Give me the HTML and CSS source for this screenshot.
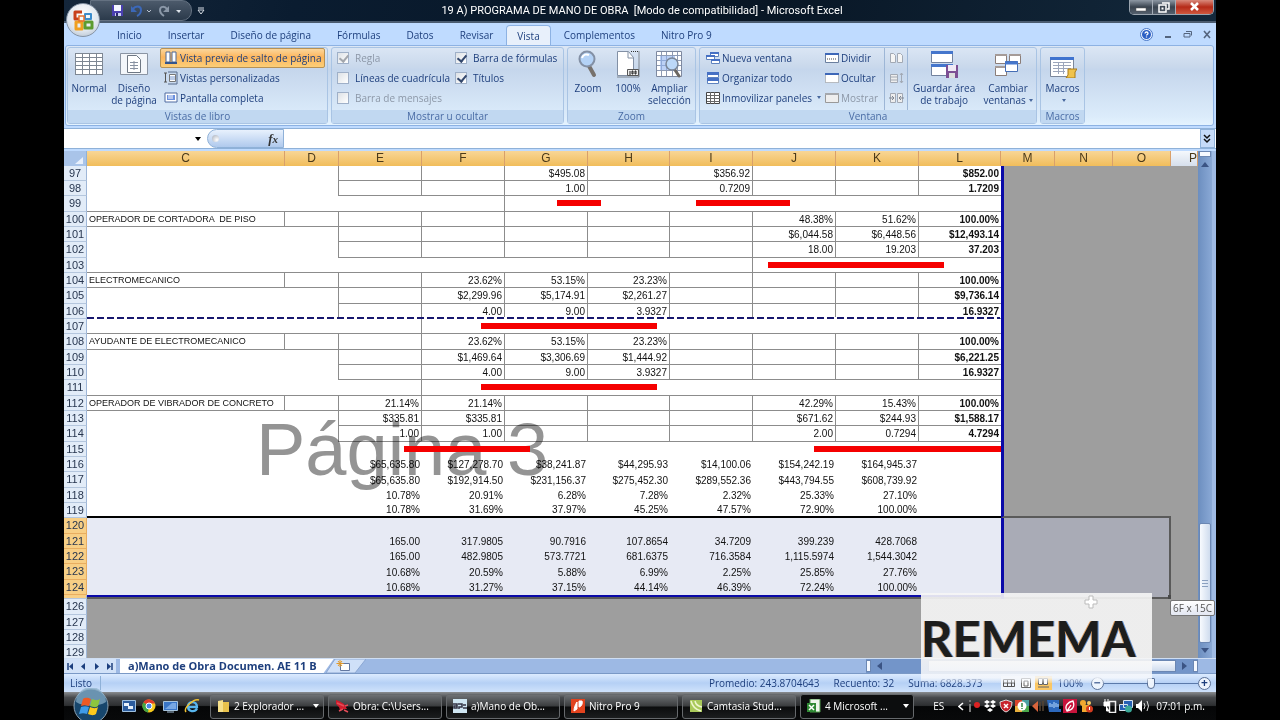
FILE: index.html
```html
<!DOCTYPE html>
<html lang="es">

<head>
    <meta charset="UTF-8">
    <meta name="viewport" content="width=device-width, initial-scale=1.0">
    <title>19 A) PROGRAMA DE MANO DE OBRA - Microsoft Excel</title>
    <link rel="stylesheet" href="styles.css">
</head>

<body>
    <div class="desktop">
        <header class="titlebar">
            <div class="quick">
                <button aria-label="Guardar"><svg width="13" height="13" viewBox="0 0 13 13"><path d="M1 1h11v11H1z" fill="#4a3fb0"/><path d="M3 1h7v6H3z" fill="#f4f6ff"/><path d="M4 9h6v3H4z" fill="#c9cff0"/><path d="M5 9h2v3H5z" fill="#2b2670"/></svg></button>
                <button aria-label="Deshacer"><svg width="22" height="13" viewBox="0 0 22 13"><path d="M3 5c2-3 8-4 8 1 0 3-2 5-4 6" fill="none" stroke="#3c68b8" stroke-width="2"/><path d="M1 2v6h6z" fill="#3c68b8"/><path d="M17 6l2 2 2-2" fill="none" stroke="#b9c2cf"/></svg></button>
                <button aria-label="Rehacer"><svg width="24" height="13" viewBox="0 0 24 13"><path d="M9 5c-2-3-7-3-7 1 0 3 1 4 4 6" fill="none" stroke="#8b98a8" stroke-width="2"/><path d="M11 2v6H5z" fill="#8b98a8"/><path d="M18 6h5l-2 3z" fill="#dde3ea"/></svg></button>
            </div>
            <button class="more" aria-label="Personalizar"><svg width="8" height="8" viewBox="0 0 8 8"><path d="M1 1h6" stroke="#d5dbe3"/><path d="M1 3h6L4 7z" fill="none" stroke="#d5dbe3"/></svg></button>
            <h1>19 A) PROGRAMA DE MANO DE OBRA&nbsp; [Modo de compatibilidad] - Microsoft Excel</h1>
            <div class="win-buttons">
                <button aria-label="Minimizar"><svg width="12" height="10" viewBox="0 0 12 10"><path d="M1 6h10v3H1z" fill="#fff" stroke="#555" stroke-width=".5"/></svg></button>
                <button aria-label="Restaurar"><svg width="12" height="11" viewBox="0 0 12 11"><path d="M4 1h7v6H9M1 3h7v7H1z" fill="none" stroke="#fff" stroke-width="1.5"/><path d="M3.500 5.500h2v2h-2z" fill="#fff"/></svg></button>
                <button class="close" aria-label="Cerrar"><svg width="11" height="10" viewBox="0 0 11 10"><path d="M2 1l7 7M9 1L2 8" stroke="#fff" stroke-width="2.500"/></svg></button>
            </div>
        </header>
        <button class="office" aria-label="Botón de Office"><svg width="24" height="24" viewBox="0 0 24 24"><path d="M11 4H4v7h4" fill="none" stroke="#c8401c" stroke-width="3" stroke-linejoin="round"/><path d="M14 6h6v5h-6z" fill="none" stroke="#3c8ccc" stroke-width="2" stroke-linejoin="round"/><path d="M5 14h6v7H5z" fill="none" stroke="#f0a020" stroke-width="3" stroke-linejoin="round"/><path d="M14 14h7v6h-7z" fill="none" stroke="#5c9c30" stroke-width="3" stroke-linejoin="round"/><path d="M8 8h5v5H8z" fill="none" stroke="#e8702c" stroke-width="1.500"/></svg></button>

        <nav class="tabs">
            <a href="#">Inicio</a>
            <a href="#">Insertar</a>
            <a href="#">Diseño de página</a>
            <a href="#">Fórmulas</a>
            <a href="#">Datos</a>
            <a href="#">Revisar</a>
            <a href="#" class="active">Vista</a>
            <a href="#">Complementos</a>
            <a href="#">Nitro Pro 9</a>
            <div class="doc-buttons">
                <button aria-label="Ayuda"><svg width="13" height="13" viewBox="0 0 13 13"><circle cx="6.500" cy="6.500" r="6" fill="#eaf2ff" stroke="#4a78c8"/><circle cx="6.500" cy="6.500" r="4.500" fill="#2c5fc4"/><path d="M5 5.500c0-2 3-2 3 0 0 1-1.500 1-1.500 2M6.500 8.500v1" fill="none" stroke="#fff" stroke-width="1.300"/></svg></button>
                <button aria-label="Minimizar libro"><svg width="8" height="10" viewBox="0 0 8 10"><path d="M1 8h6" stroke="#54657e" stroke-width="2"/></svg></button>
                <button aria-label="Restaurar libro"><svg width="9" height="9" viewBox="0 0 9 9"><path d="M3 1.500h5.500v4M1 3.500h6V7H1z" fill="none" stroke="#54657e"/></svg></button>
                <button aria-label="Cerrar libro"><svg width="9" height="9" viewBox="0 0 9 9"><path d="M1 1l6 7M7 1L1 8" stroke="#54657e" stroke-width="1.600"/></svg></button>
            </div>
        </nav>

        <div class="ribbon">
            <section class="group libro">
                <div class="tools">
                    <button class="large"><svg width="28" height="28" viewBox="0 0 28 28"><path d="M0 3h28v22H0z" fill="#fff"/><path d="M0 3.500h28M0 7.500h28M0 11.500h28M0 15.500h28M0 19.500h28M0 24.500h28M.5 3v22M7.500 3v22M14.500 3v22M21.500 3v22M27.500 3v22" stroke="#7e8793" fill="none"/></svg><span>Normal</span></button>
                    <button class="large page-layout"><svg width="28" height="28" viewBox="0 0 28 28"><path d="M.5 3.500h27v21H.5z" fill="#f3f6fa" stroke="#8a94a3"/><path d="M7.500 5.500h9l4 4v13h-13z" fill="#fff" stroke="#6f7884"/><path d="M10 12.500h8M10 15.500h8M10 18.500h8M14 11v9" stroke="#8790a0"/></svg><span>Diseño<br>de página</span></button>
                    <div class="stack">
                        <button class="small pressed"><svg width="14" height="14" viewBox="0 0 14 14"><path d="M2 1h4v10H2zM8 1h4v10H8z" fill="#fff" stroke="#4d6794"/><path d="M1 12h12" stroke="#34558d" stroke-width="2"/></svg>Vista previa de salto de página</button>
                        <button class="small"><svg width="14" height="14" viewBox="0 0 14 14"><path d="M0 2h3M0 11h3M1.500 2v9" stroke="#555"/><path d="M5.500 3.500h6v7h-6z" fill="#fff" stroke="#777"/><path d="M4 1h9v12H4" fill="none" stroke="#566b8c"/><path d="M6 6h5M6 8h5" stroke="#7898d0"/></svg>Vistas personalizadas</button>
                        <button class="small"><svg width="14" height="14" viewBox="0 0 14 14"><path d="M1 2h12v9H1z" fill="#fff" stroke="#4f6ba0"/><path d="M3 4h8v5H3z" fill="#6c91de"/><path d="M4 5h5M4 7h5" stroke="#fff"/></svg>Pantalla completa</button>
                    </div>
                </div>
                <h2>Vistas de libro</h2>
            </section>

            <section class="group mostrar">
                <div class="tools checks">
                    <label class="off"><input type="checkbox" checked disabled>Regla</label>
                    <label><input type="checkbox" checked>Barra de fórmulas</label>
                    <label><input type="checkbox">Líneas de cuadrícula</label>
                    <label><input type="checkbox" checked>Títulos</label>
                    <label class="off"><input type="checkbox" disabled>Barra de mensajes</label>
                </div>
                <h2>Mostrar u ocultar</h2>
            </section>

            <section class="group zoom">
                <div class="tools">
                    <button class="large"><svg width="28" height="28" viewBox="0 0 28 28"><path d="M15 16l5 9" stroke="#77716c" stroke-width="4" stroke-linecap="round"/><circle cx="13" cy="9" r="7.500" fill="#b4d2f6" stroke="#8390a5" stroke-width="2"/><path d="M8 8c1-4 5-4 7-3" stroke="#fff" stroke-width="2" fill="none"/></svg><span>Zoom</span></button>
                    <button class="large"><svg width="28" height="28" viewBox="0 0 28 28"><path d="M3.500 1.500h11l5 6v18h-16z" fill="#fff" stroke="#8290a5"/><path d="M14 2v6h6" fill="none" stroke="#8290a5"/><path d="M17 1.500h8V27H3" fill="none" stroke="#333" stroke-dasharray="1 1"/><path d="M13.500 19.500h11v6h-11z" fill="#eee" stroke="#555"/><path d="M16 21v4M19 21h-1v3h1zM22 21h-1v3h1z" stroke="#222" fill="none"/></svg><span>100%</span></button>
                    <button class="large"><svg width="28" height="28" viewBox="0 0 28 28"><path d="M1.500 1.500h25v25h-25z" fill="#fff" stroke="#7e89a0"/><path d="M2 5.500h24M2 10.500h24M2 15.500h24M2 20.500h24M6.500 2v24M11.500 2v24M17.500 2v24M22.500 2v24" stroke="#8e9bb4"/><path d="M5 6h15v14H5z" fill="#8fb3f0" opacity=".6"/><path d="M20 20l4 6" stroke="#6b6761" stroke-width="3" stroke-linecap="round"/><circle cx="17" cy="14" r="6" fill="#bcd8f8" stroke="#7a8698" stroke-width="1.500"/></svg><span>Ampliar<br>selección</span></button>
                </div>
                <h2>Zoom</h2>
            </section>

            <section class="group ventana">
                <div class="tools">
                    <div class="stack">
                        <button class="small"><svg width="14" height="14" viewBox="0 0 14 14"><path d="M4.500 1.500h8v4h-8zM.5 4.500h8v4h-8zM5.500 8.500h8v4h-8z" fill="#fff" stroke="#5e82be"/><path d="M4 2h9M0 5h9M5 9h9" stroke="#4670c4" stroke-width="2"/></svg>Nueva ventana</button>
                        <button class="small"><svg width="14" height="14" viewBox="0 0 14 14"><path d="M1.500 1.500h11v5h-11zM1.500 7.500h11v5h-11z" fill="#fff" stroke="#5e82be"/><path d="M1 2.500h12M1 8.500h12" stroke="#4670c4" stroke-width="3"/></svg>Organizar todo</button>
                        <button class="small"><svg width="14" height="14" viewBox="0 0 14 14"><path d="M.5 1.500h13v11H.5z" fill="#fff" stroke="#444"/><path d="M1 4.500h13M1 7.500h13M1 10.500h13M4.500 1v12M8.500 1v12" stroke="#666"/></svg>Inmovilizar paneles<i class="caret"></i></button>
                    </div>
                    <div class="stack">
                        <button class="small"><svg width="14" height="14" viewBox="0 0 14 14"><path d="M.5 2.500h13v9H.5z" fill="#fff" stroke="#6a7f9f"/><path d="M0 3h14" stroke="#3d67b8" stroke-width="2"/><path d="M2 8h10" stroke="#444" stroke-dasharray="1 1"/></svg>Dividir</button>
                        <button class="small"><svg width="14" height="14" viewBox="0 0 14 14"><path d="M.5 2.500h13v9H.5z" fill="#fff" stroke="#888" stroke-dasharray="1 1"/><path d="M0 3h14" stroke="#3d67b8" stroke-width="2"/></svg>Ocultar</button>
                        <button class="small" disabled><svg width="14" height="14" viewBox="0 0 14 14"><path d="M.5 2.500h13v9H.5z" fill="#eee" stroke="#999"/><path d="M0 3h14" stroke="#a5a8ad" stroke-width="2"/></svg>Mostrar</button>
                    </div>
                    <div class="stack ruled">
                        <button class="small" disabled aria-label="Ver en paralelo"><svg width="15" height="14" viewBox="0 0 15 14"><path d="M1.500 2.500h3l2 2v7h-5zM8.500 2.500h3l2 2v7h-5z" fill="#f5f5f5" stroke="#a2a9b4"/></svg></button>
                        <button class="small" disabled aria-label="Desplazamiento sincrónico"><svg width="15" height="14" viewBox="0 0 15 14"><path d="M1.500 3.500h7v8h-7z" fill="#eee" stroke="#a2a9b4"/><path d="M2 6h6M2 9h6M12.500 2v10M11 4l1.500-2L14 4M11 10l1.500 2 1.500-2" stroke="#a2a9b4" fill="none"/></svg></button>
                        <button class="small" disabled aria-label="Restablecer posición"><svg width="15" height="14" viewBox="0 0 15 14"><path d="M1.500 2.500h5v9h-5zM8.500 2.500h5v9h-5z" fill="#eee" stroke="#a2a9b4"/><path d="M0 7h5M10 7h5M3 5l2 2-2 2M12 5l-2 2 2 2" stroke="#7e8794" fill="none"/></svg></button>
                    </div>
                    <button class="large save-area"><svg width="28" height="28" viewBox="0 0 28 28"><path d="M1.500 1.500h21v11h-21zM1.500 14.500h21v11h-21z" fill="#fff" stroke="#72829e"/><path d="M1 2.500h22M1 15.500h22" stroke="#4576cc" stroke-width="3"/><path d="M16 15h12v13H16z" fill="#7d4f94"/><path d="M18 15h8v6h-8z" fill="#f0eaf5"/><path d="M19 23h6v5h-6z" fill="#ddd"/></svg><span>Guardar área<br>de trabajo</span></button>
                    <button class="large"><svg width="28" height="28" viewBox="0 0 28 28"><path d="M1.500 4.500h11v9h-11zM15.500 4.500h11v9h-11zM1.500 16.500h11v9h-11z" fill="#fff" stroke="#8b7d78"/><path d="M1 5h12M15 5h12M1 17h12" stroke="#a59b98" stroke-width="2"/><path d="M11.500 11.500h12v10h-12z" fill="#fff" stroke="#456db5"/><path d="M11 13h13" stroke="#4576cc" stroke-width="3"/></svg><span>Cambiar<br>ventanas<i class="caret"></i></span></button>
                </div>
                <h2>Ventana</h2>
            </section>

            <section class="group macros">
                <div class="tools">
                    <button class="large"><svg width="28" height="28" viewBox="0 0 28 28"><path d="M1.500 7.500h23v19h-23z" fill="#fff" stroke="#7b879b"/><path d="M1 8.500h24" stroke="#3f73cf" stroke-width="3"/><path d="M4 12.500h18M4 15.500h18M4 18.500h18M4 21.500h12M9.500 12v12M14.500 12v12" stroke="#9ca6bb"/><path d="M19 19h9l-2 3v6h-9l2-3z" fill="#f0c34c" stroke="#a87a18"/></svg><span>Macros<br><i class="caret"></i></span></button>
                </div>
                <h2>Macros</h2>
            </section>
        </div>

        <div class="formula-bar">
            <select class="name-box" aria-label="Cuadro de nombres"><option></option></select>
            <i class="caret"></i>
            <button class="fx" aria-label="Insertar función"><i></i>f<sub>x</sub></button>
            <input type="text" aria-label="Barra de fórmulas">
            <button class="expand" aria-label="Expandir"><svg width="9" height="10" viewBox="0 0 9 10"><path d="M1 1l3 3 3-3M1 5l3 3 3-3" fill="none" stroke="#111" stroke-width="1.500"/></svg></button>
        </div>

        <main class="sheet">
            <div class="cells">
                <table>
                    <colgroup>
                        <col class="w-num"><col class="w-c"><col class="w-d"><col class="w-m"><col class="w-m"><col class="w-m"><col class="w-s"><col class="w-m"><col class="w-m"><col class="w-m"><col class="w-s"><col class="w-d"><col class="w-n"><col class="w-n"><col>
                    </colgroup>
                    <thead>
                        <tr><th class="corner"><svg width="8" height="7" viewBox="0 0 8 7"><path d="M8 0v7H0z" fill="#e8f0fc"/></svg></th><th>C</th><th>D</th><th>E</th><th>F</th><th>G</th><th>H</th><th>I</th><th>J</th><th>K</th><th>L</th><th>M</th><th>N</th><th>O</th><th class="plain">P</th></tr>
                    </thead>
                    <tbody id="filas"></tbody>
                </table>
                <div class="watermark">Página 3</div>
            </div>
            <div class="vscroll">
                <span class="split"></span>
                <button aria-label="Subir"><svg width="8" height="5" viewBox="0 0 8 5"><path d="M0 5l4-5 4 5z" fill="#3b5484"/></svg></button>
                <span class="track"></span>
                <span class="thumb"></span>
                <button aria-label="Bajar"><svg width="8" height="5" viewBox="0 0 8 5"><path d="M0 0l4 5 4-5z" fill="#3b5484"/></svg></button>
            </div>
            <div class="tip">6F x 15C</div>
            <div class="brand">REMEMA</div>
            <svg class="cursor" width="14" height="14" viewBox="0 0 14 14"><path d="M5 1h4v4h4v4H9v4H5V9H1V5h4z" fill="#fff" stroke="#bbb"/></svg>
        </main>

        <div class="sheet-tabs">
            <button aria-label="Primera hoja"><svg width="7" height="7" viewBox="0 0 7 7"><path d="M1 0v7" stroke="#1c3f7e" stroke-width="1.500"/><path d="M6 0v7L2 3.500z" fill="#1c3f7e"/></svg></button>
            <button aria-label="Hoja anterior"><svg width="7" height="7" viewBox="0 0 7 7"><path d="M5 0v7L1 3.500z" fill="#1c3f7e"/></svg></button>
            <button aria-label="Hoja siguiente"><svg width="7" height="7" viewBox="0 0 7 7"><path d="M2 0v7l4-3.500z" fill="#1c3f7e"/></svg></button>
            <button aria-label="Última hoja"><svg width="7" height="7" viewBox="0 0 7 7"><path d="M6 0v7" stroke="#1c3f7e" stroke-width="1.500"/><path d="M1 0v7l4-3.500z" fill="#1c3f7e"/></svg></button>
            <a href="#" class="sheet-name">a)Mano de Obra Documen. AE 11 B</a>
            <button class="new-sheet" aria-label="Insertar hoja"><svg width="40" height="14" viewBox="0 0 40 14"><path d="M9 0h31L29 14H0z" fill="#cfe0f8" stroke="#8ba7d3"/><path d="M14.500 4.500h9v7h-9z" fill="#fff" stroke="#6277a0"/><path d="M14 1v7M10.500 4.500h7M12 2l4 5M16 2l-4 5" stroke="#e39a28"/></svg></button>
            <div class="hscroll">
                <span class="grip"></span>
                <button aria-label="Izquierda"><svg width="5" height="8" viewBox="0 0 5 8"><path d="M5 0v8L0 4z" fill="#3b5484"/></svg></button>
                <span class="track"></span>
                <span class="thumb"></span>
                <button aria-label="Derecha"><svg width="5" height="8" viewBox="0 0 5 8"><path d="M0 0v8l5-4z" fill="#3b5484"/></svg></button>
                <span class="grip"></span>
            </div>
        </div>

        <div class="status">
            <span class="ready">Listo</span>
            <span class="sums"><span>Promedio: 243.8704643</span><span>Recuento: 32</span><span>Suma: 6828.373</span></span>
            <div class="views">
                <button aria-label="Normal"><svg width="12" height="10" viewBox="0 0 12 10"><path d="M.5 1.500h11v7H.5zM0 5h12M4.500 1v8M8.500 1v8" fill="none" stroke="#555"/></svg></button>
                <button aria-label="Diseño de página"><svg width="12" height="10" viewBox="0 0 12 10"><path d="M1.500.5h9v9h-9zM4 3h4v5H4z" fill="#fff" stroke="#666"/></svg></button>
                <button class="on" aria-label="Salto de página"><svg width="12" height="10" viewBox="0 0 12 10"><path d="M1.500.5h4v6h-4zM6.500.5h4v6h-4z" fill="#fff" stroke="#666"/><path d="M1 9h11" stroke="#666"/></svg></button>
            </div>
            <span class="percent">100%</span>
            <button class="round" aria-label="Alejar">−</button>
            <input type="range" aria-label="Zoom" min="0" max="100" value="50">
            <button class="round" aria-label="Acercar">+</button>
        </div>

        <footer class="taskbar">
            <button class="start" aria-label="Inicio"><svg width="36" height="36" viewBox="0 0 36 36"><circle cx="18" cy="18" r="17" fill="#17466c" stroke="#8ea3b3"/><path d="M3 14a15 15 0 0 1 30 0c-8 5-22 5-30 0z" fill="#8eb4cd" opacity=".7"/><path d="M10 11c3-2 5-1 8 0l-2 7c-3-1-5-1-8 0z" fill="#ee5a24"/><path d="M19 11c3 1 5 2 8 0l-2 7c-3 2-5 1-8 0z" fill="#8cc63e"/><path d="M8 19c3-1 5-1 8 0l-2 7c-3-1-5-1-8 0z" fill="#3e9be8"/><path d="M17 19c3 1 5 2 8 0l-2 7c-3 2-5 1-8 0z" fill="#fbc81c"/></svg></button>
            <div class="launch">
                <button aria-label="Cambiar ventana"><svg width="14" height="12" viewBox="0 0 14 12"><path d="M.5.5h13v11H.5z" fill="#2b5c9e" stroke="#9fc0df"/><path d="M2 3h5v3H2zM6 6h5v3H6z" fill="#e6f0fa"/></svg></button>
                <button aria-label="Chrome"><svg width="14" height="14" viewBox="0 0 14 14"><circle cx="7" cy="7" r="6.500" fill="#f6c91c"/><path d="M7 7L1.400 3.500A6.500 6.500 0 0 1 13 4.500H7z" fill="#e03c2c"/><path d="M7 7L1.400 3.500A6.500 6.500 0 0 0 6 13.400z" fill="#43a345"/><circle cx="7" cy="7" r="3" fill="#4a86e8" stroke="#fff"/></svg></button>
                <button aria-label="Escritorio"><svg width="15" height="13" viewBox="0 0 15 13"><path d="M.5 1.500h14v9H.5z" fill="#3a76c8" stroke="#a8c4dc"/><path d="M2 9l7-6h4v6z" fill="#78a8e4"/><path d="M4 12h7" stroke="#a8c4dc"/></svg></button>
                <button aria-label="Internet Explorer"><svg width="16" height="16" viewBox="0 0 16 16"><path d="M13 10.500c-2 4-9 3.500-9-2 0-6 9-6 9 .5H5" fill="none" stroke="#58b6ee" stroke-width="2.300"/><path d="M2 14c-3-4 8-14 13-12" fill="none" stroke="#f0c030" stroke-width="1.500"/></svg></button>
            </div>
            <div class="tasks">
                <button><svg width="13" height="14" viewBox="0 0 13 14"><path d="M1 2l5-1v12H1z" fill="#f6e08a"/><path d="M6 3h6v10H6z" fill="#e8c24c"/></svg><span>2 Explorador ...</span><i class="caret"></i></button>
                <button><svg width="14" height="14" viewBox="0 0 14 14"><path d="M1 1l3 1 5 3 3 5h-3l-4 1-1-3-3-3z" fill="#d01c2c"/><path d="M2 4l7 3M4 12l4-2M9 11l4 2M10 7l3-1" stroke="#e34c58" stroke-width="1.500"/></svg><span>Obra: C:\Users...</span></button>
                <button><svg width="14" height="14" viewBox="0 0 14 14"><path d="M0 0h14v14H0z" fill="#cfe6f2"/><path d="M0 5h4v4H1V7h3M5 5h4v3H6v2M10 6h3M10 9h4" stroke="#334" stroke-width="1.500" fill="none"/></svg><span>a)Mano de Ob...</span></button>
                <button><svg width="14" height="14" viewBox="0 0 14 14"><path d="M0 0h14v14H0z" fill="#e2431e"/><path d="M3 12c0-3 1-6 3-9v7zM8 2h3c1 3-1 6-3 6z" fill="#fff" stroke="#fff"/></svg><span>Nitro Pro 9</span></button>
                <button><svg width="14" height="14" viewBox="0 0 14 14"><path d="M1 1h12v12H1z" fill="#a9c95a"/><path d="M2 2q2 8 10 10M6 2q1 5 7 6" stroke="#eef5cc" stroke-width="1.500" fill="none"/></svg><span>Camtasia Stud...</span></button>
                <button class="current"><svg width="14" height="14" viewBox="0 0 14 14"><path d="M3 0h10v13H3z" fill="#eef6ec" stroke="#4d9a48"/><path d="M0 4h9v9H0z" fill="#2f8a34"/><path d="M2 6l5 5M7 6l-5 5" stroke="#fff" stroke-width="1.500"/></svg><span>4 Microsoft ...</span><i class="caret"></i></button>
            </div>
            <span class="lang">ES</span>
            <div class="tray">
                <svg width="7" height="9" viewBox="0 0 7 9"><path d="M5 1L1 4.500 5 8" stroke="#fff" stroke-width="1.600" fill="none"/></svg>
                <svg width="14" height="14" viewBox="0 0 14 14"><path d="M3 5v8M2 2h2" stroke="#777" stroke-width="2"/><circle cx="10" cy="6" r="3" fill="#d22"/></svg>
                <svg width="14" height="14" viewBox="0 0 14 14"><path d="M4 1l3 2-3 2-3-2zM10 1l3 2-3 2-3-2zM4 5l3 2-3 2-3-2zM10 5l3 2-3 2-3-2zM7 9l3 2-3 2-3-2z" fill="#fff"/></svg>
                <svg width="14" height="14" viewBox="0 0 14 14"><path d="M7 1l6 2q0 8-6 10Q1 11 1 3z" fill="#c8242c" stroke="#ddd"/><path d="M5 5l4 4M9 5L5 9" stroke="#fff" stroke-width="1.500"/></svg>
                <svg width="14" height="14" viewBox="0 0 14 14"><path d="M0 1h7v6H0z" fill="#d8442c"/><path d="M7 7h7v6H7z" fill="#4aa84a"/><path d="M7 1h7v6H7z" fill="#4aa0a0"/><path d="M0 7h7v6H0z" fill="#e8b03c"/><circle cx="7" cy="7" r="4.500" fill="#fff"/><path d="M7 4v4M7 9v1" stroke="#384" stroke-width="1.500"/></svg>
                <svg width="14" height="14" viewBox="0 0 14 14"><path d="M1 7l6-5v11z" fill="#d8643c"/><path d="M9 3v9M12 2v10" stroke="#543" stroke-width="1.500"/></svg>
                <svg width="14" height="14" viewBox="0 0 14 14"><path d="M0 1h12v9h2v3H2z" fill="#2c68bc"/><path d="M3 4v4M5 5v3M7 3v6M9 4v4M11 5v3" stroke="#b9dcff"/></svg>
                <svg width="14" height="14" viewBox="0 0 14 14"><path d="M0 0h14v14H0z" fill="#c8143c"/><path d="M4 12c-3-5 1-9 6-10 2 5 0 9-6 10zM4 12l4-6" stroke="#fff" fill="none" stroke-width="1.300"/></svg>
                <svg width="14" height="14" viewBox="0 0 14 14"><circle cx="4" cy="4" r="3" fill="#f0a830"/><path d="M3 6h7v7H3z" fill="#f0a830"/><circle cx="10" cy="4" r="2" fill="#f5c860"/><circle cx="10.500" cy="10" r="3.500" fill="#d43c20"/><path d="M10.500 8v3" stroke="#fff"/></svg>
                <svg class="gap" width="14" height="14" viewBox="0 0 14 14"><path d="M6.500 2.500h6v11h-6z" fill="none" stroke="#eee" stroke-width="1.500"/><path d="M2 0v3M5 0v3M1 3h5v4H1zM3.500 7v5h3" stroke="#fff" fill="#fff"/></svg>
                <svg width="14" height="14" viewBox="0 0 14 14"><path d="M4.500 1.500h9v7h-9zM.5 5.500h8v6h-8z" fill="#2660b4" stroke="#d9e4f0"/><circle cx="9.500" cy="10" r="3.500" fill="#3aa898"/></svg>
                <svg width="15" height="14" viewBox="0 0 15 14"><path d="M1 5h2l4-4v12L3 9H1z" fill="#fff"/><path d="M9 4q2 3 0 6M12 2q3 5 0 10" stroke="#ddd" fill="none"/></svg>
            </div>
            <time>07:01 p.m.</time>
        </footer>
    </div>

    <script>
        // Cada fila: número, etiqueta (columna C) y valores de E a L
        const filas = [
            [97, '', '', '', '$495.08', '', '$356.92', '', '', '$852.00'],
            [98, '', '', '', '1.00', '', '0.7209', '', '', '1.7209'],
            [99],
            [100, 'OPERADOR DE CORTADORA \u00a0DE PISO', '', '', '', '', '', '48.38%', '51.62%', '100.00%'],
            [101, '', '', '', '', '', '', '$6,044.58', '$6,448.56', '$12,493.14'],
            [102, '', '', '', '', '', '', '18.00', '19.203', '37.203'],
            [103],
            [104, 'ELECTROMECANICO', '', '23.62%', '53.15%', '23.23%', '', '', '', '100.00%'],
            [105, '', '', '$2,299.96', '$5,174.91', '$2,261.27', '', '', '', '$9,736.14'],
            [106, '', '', '4.00', '9.00', '3.9327', '', '', '', '16.9327'],
            [107],
            [108, 'AYUDANTE DE ELECTROMECANICO', '', '23.62%', '53.15%', '23.23%', '', '', '', '100.00%'],
            [109, '', '', '$1,469.64', '$3,306.69', '$1,444.92', '', '', '', '$6,221.25'],
            [110, '', '', '4.00', '9.00', '3.9327', '', '', '', '16.9327'],
            [111],
            [112, 'OPERADOR DE VIBRADOR DE CONCRETO', '21.14%', '21.14%', '', '', '', '42.29%', '15.43%', '100.00%'],
            [113, '', '$335.81', '$335.81', '', '', '', '$671.62', '$244.93', '$1,588.17'],
            [114, '', '1.00', '1.00', '', '', '', '2.00', '0.7294', '4.7294'],
            [115],
            [116, '', '$65,635.80', '$127,278.70', '$38,241.87', '$44,295.93', '$14,100.06', '$154,242.19', '$164,945.37'],
            [117, '', '$65,635.80', '$192,914.50', '$231,156.37', '$275,452.30', '$289,552.36', '$443,794.55', '$608,739.92'],
            [118, '', '10.78%', '20.91%', '6.28%', '7.28%', '2.32%', '25.33%', '27.10%'],
            [119, '', '10.78%', '31.69%', '37.97%', '45.25%', '47.57%', '72.90%', '100.00%'],
            [120],
            [121, '', '165.00', '317.9805', '90.7916', '107.8654', '34.7209', '399.239', '428.7068'],
            [122, '', '165.00', '482.9805', '573.7721', '681.6375', '716.3584', '1,115.5974', '1,544.3042'],
            [123, '', '10.68%', '20.59%', '5.88%', '6.99%', '2.25%', '25.85%', '27.76%'],
            [124, '', '10.68%', '31.27%', '37.15%', '44.14%', '46.39%', '72.24%', '100.00%'],
            [125], [126], [127], [128], [129]
        ];

        // Barras del programa: fila -> [inicio, ancho]
        const barras = {
            99: [[470, 44], [609, 94]],
            103: [[681, 176]],
            107: [[394, 176]],
            111: [[394, 176]],
            115: [[317, 126], [727, 187]]
        };

        // Columna que lleva línea vertical en las filas de barras
        const verticales = { 99: 3, 103: 6, 107: 2, 111: 2 };

        const cuerpo = document.getElementById('filas');
        filas.forEach(fila => {
            const numero = fila[0];
            const tr = document.createElement('tr');
            const th = document.createElement('th');
            th.textContent = numero === 125 ? '' : numero;
            tr.appendChild(th);

            // 14 celdas: de la C a la P
            for (let c = 0; c < 14; c++) {
                const td = document.createElement('td');
                if (c === 0) td.textContent = fila[1] || '';
                if (c >= 2) td.textContent = fila[c] || '';
                if (c > 9) td.className = 'outside';
                if (verticales[numero] + 0 === c) td.className = 'line';
                tr.appendChild(td);
            }

            if (numero <= 114) tr.className = barras[numero] ? 'bars' : (fila[1] ? 'grid label' : 'grid');
            if (numero === 115) tr.className = 'bars last';
            if (numero === 119) tr.className = 'before';
            if (numero >= 120 && numero <= 124) tr.className = 'selected';
            if (numero === 125) tr.className = 'edge';
            if (numero > 125) tr.className = 'blank';

            (barras[numero] || []).forEach(b => {
                const barra = document.createElement('span');
                barra.className = 'bar';
                barra.style.left = b[0] + 'px';
                barra.style.width = b[1] + 'px';
                tr.children[1].appendChild(barra);
            });
            if (numero === 106) {
                const salto = document.createElement('span');
                salto.className = 'page-break';
                tr.children[1].appendChild(salto);
            }
            if (numero === 125) {
                const control = document.createElement('span');
                control.className = 'handle';
                tr.children[13].appendChild(control);
            }
            cuerpo.appendChild(tr);
        });
    </script>
</body>

</html>
```

FILE: styles.css
```css
* {
    box-sizing: border-box;
}

body {
    margin: 0;
    background: #000;
    color: #1e3f7d;
    font-family: "Open Sans", "Noto Sans", sans-serif;
    font-size: 10px;
}

button {
    border: none;
    background: none;
    padding: 0;
    color: inherit;
    font: inherit;
    display: flex;
    align-items: center;
    justify-content: center;
}

svg {
    flex: none;
}

.desktop {
    position: relative;
    display: flex;
    flex-direction: column;
    height: 100vh;
    margin: 0 64px;
    overflow: hidden;
    background: #bfdbff;
}

/* Barra de título */
.titlebar {
    display: flex;
    align-items: center;
    height: 23px;
    padding-left: 26px;
    background: linear-gradient(100deg, #14263a, #0a1c30 20%, #081625 60%, #13283b);
    border-bottom: 2px solid #4b5c70;
}

.quick {
    display: flex;
    align-items: center;
    gap: 6px;
    width: 102px;
    height: 21px;
    padding-left: 20px;
    background: linear-gradient(#4c5a6b, #2b3a4b);
    border: 1px solid #647181;
    border-radius: 0 10px 10px 0;
}

.more {
    margin-left: 5px;
}

.titlebar h1 {
    flex: 1;
    margin: 0;
    padding-right: 50px;
    color: #fff;
    font-family: Roboto, "Open Sans", sans-serif;
    font-size: 11px;
    font-weight: 400;
    line-height: 22px;
    text-align: center;
    white-space: nowrap;
}

.win-buttons {
    display: flex;
    align-self: flex-start;
    margin-right: 2px;
    border: 1px solid #9aa4af;
    border-top: none;
    border-radius: 0 0 5px 5px;
    overflow: hidden;
}

.win-buttons button {
    width: 23px;
    height: 14px;
    background: linear-gradient(#8e98a4, #39434f 50%, #56616e);
    border-right: 1px solid #a5adb7;
}

.win-buttons .close {
    width: 37px;
    background: linear-gradient(#d98a7c, #b52a18 50%, #d0583f);
    border: none;
}

.office {
    position: absolute;
    left: 2px;
    top: 3px;
    width: 34px;
    height: 34px;
    border-radius: 50%;
    background: radial-gradient(circle at 50% 35%, #fff, #dfe6ee 60%, #a9b7c7);
    border: 1px solid #8593a5;
}

/* Pestañas */
.tabs {
    display: flex;
    height: 22px;
    padding-left: 40px;
    font-size: 10px;
}

.tabs a {
    padding: 0 13px;
    color: #1e3f7d;
    line-height: 24px;
    text-decoration: none;
    white-space: nowrap;
}

.tabs .active {
    margin-top: 2px;
    padding: 0 10px;
    line-height: 20px;
    background: #e8f0fb;
    border: 1px solid #8db2e3;
    border-bottom: none;
    border-radius: 4px 4px 0 0;
}

.doc-buttons {
    display: flex;
    gap: 11px;
    margin-left: auto;
    padding-right: 4px;
}

/* Cinta de opciones */
.ribbon {
    display: flex;
    gap: 3px;
    height: 81px;
    margin: 0 2px 2px 1px;
    padding: 1px;
    background: linear-gradient(#dce7f5, #cad9ec 25%, #c5d6ec 30%, #dcecfb 90%, #e4f3ff);
    border: 1px solid #8db2e3;
    border-radius: 3px;
}

.group {
    display: flex;
    flex-direction: column;
    border: 1px solid #a9c4e4;
    border-radius: 3px;
}

.libro {
    width: 261px;
}

.mostrar {
    width: 233px;
}

.zoom {
    width: 129px;
}

.ventana {
    width: 338px;
}

.macros {
    width: 45px;
}

.group h2 {
    margin: 0;
    color: #4a6ca5;
    background: #c1d8f1;
    font-size: 10px;
    font-weight: 400;
    line-height: 13px;
    text-align: center;
}

.tools {
    display: flex;
    flex: 1;
    min-height: 0;
}

.large {
    flex-direction: column;
    justify-content: flex-start;
    flex: 1;
    padding-top: 2px;
    line-height: 12px;
    white-space: nowrap;
}

.large span {
    margin-top: 4px;
}

.libro .large {
    flex: 0 0 42px;
}

.libro .page-layout {
    flex: 0 0 48px;
    margin-right: 2px;
}

.zoom .large {
    flex: 0 0 40px;
}

.stack {
    display: flex;
    flex-direction: column;
}

.small {
    justify-content: flex-start;
    gap: 2px;
    height: 20px;
    padding: 0 3px;
    border: 1px solid transparent;
    white-space: nowrap;
}

.small:disabled {
    color: #8d98a8;
}

.pressed {
    background: linear-gradient(#fbd69c, #fdb65d 45%, #fcce78);
    border-color: #b79255;
    border-radius: 2px;
}

.ventana .tools {
    padding-left: 2px;
}

.ventana .small {
    padding: 0 2px 0 3px;
}

.ventana .stack + .stack {
    margin-left: -3px;
}

.ventana .ruled.stack {
    margin-left: 3px;
    border: solid #9db6d6;
    border-width: 0 1px;
}

.save-area {
    flex: 0 0 72px;
}

.caret {
    display: inline-block;
    margin: 0 0 2px 3px;
    border: 2px solid transparent;
    border-top: 3px solid #48689d;
    border-bottom: none;
}

.checks {
    display: grid;
    grid-template-columns: 118px 1fr;
    grid-auto-rows: 20px;
    padding-left: 5px;
}

.checks label {
    display: flex;
    align-items: center;
    gap: 6px;
    white-space: nowrap;
}

.checks .off {
    color: #8d98a8;
}

.checks input {
    appearance: none;
    width: 12px;
    height: 12px;
    margin: 0;
    background: linear-gradient(135deg, #dde1e6, #fff);
    border: 1px solid #9fb0c8;
}

.checks input:checked::before {
    content: "";
    display: block;
    width: 4px;
    height: 7px;
    margin: 0 0 0 3px;
    border: solid #35496e;
    border-width: 0 2px 2px 0;
    transform: rotate(40deg);
}

.checks .off input:checked::before {
    border-color: #a3a7ad;
}

/* Barra de fórmulas */
.formula-bar {
    display: flex;
    height: 21px;
    margin-bottom: 2px;
    background: #fff;
    border: solid #8fb1d8;
    border-width: 1px 0;
}

.name-box {
    appearance: none;
    width: 131px;
    border: none;
    background: #fff;
}

.formula-bar .caret {
    align-self: center;
    margin: 0;
    border-width: 4px 3px 0;
    border-top-color: #000;
}

.fx {
    width: 77px;
    margin-left: 6px;
    padding-right: 5px;
    justify-content: flex-end;
    background: linear-gradient(#e8f1fd, #afc9ed);
    border: 1px solid #8fb1d8;
    border-radius: 10px 0 0 10px;
    color: #333;
    font: italic bold 13px "Liberation Serif", serif;
}

.fx i {
    width: 7px;
    height: 7px;
    margin-right: auto;
    margin-left: 4px;
    border-radius: 50%;
    background: radial-gradient(circle at 70% 70%, #fff, #a5adba);
}

.fx sub {
    font-size: 11px;
}

.formula-bar input {
    flex: 1;
    min-width: 0;
    border: none;
    padding: 0;
}

.expand {
    width: 15px;
    margin-right: 1px;
    background: #c6dbf8;
    border: 1px solid #8fb1d8;
}

/* Hoja */
.sheet {
    position: relative;
    flex: 1;
    display: flex;
    min-height: 0;
    background: #9fbbe4;
}

.cells {
    position: relative;
    flex: 1;
    min-width: 0;
    overflow: hidden;
    background: #9e9e9e;
}

table {
    width: 100%;
    table-layout: fixed;
    border-collapse: separate;
    border-spacing: 0;
    color: #111;
    font-family: "Liberation Sans", Arial, sans-serif;
    font-size: 10px;
}

.w-num {
    width: 23px;
}

.w-c {
    width: 198px;
}

.w-d {
    width: 54px;
}

.w-m {
    width: 83px;
}

.w-s {
    width: 82px;
}

.w-n {
    width: 58px;
}

th {
    padding: 0;
    font-size: 11px;
    font-weight: 400;
    line-height: 13px;
    color: #27364f;
    white-space: nowrap;
    overflow: hidden;
}

thead th {
    height: 15px;
    color: #4b3a1a;
    font-size: 12px;
    background: linear-gradient(#f8d696, #f1bd5b);
    border-right: 1px solid #d9a06a;
}

thead .corner {
    background: #a9c4e9;
    border-right: 1px solid #8fb1d8;
    text-align: right;
    line-height: 0;
    padding: 4px 3px 0 0;
}

thead .plain {
    background: linear-gradient(#f5f8fc, #d6dfec);
    text-align: right;
}

tbody tr {
    height: 15px;
}

tbody tr:nth-child(3n) {
    height: 16px;
}

tbody th {
    background: #e2ecf8;
    border-right: 1px solid #9eb6d7;
    border-bottom: 1px solid #b4c6dd;
}

td {
    position: relative;
    padding: 0 2px;
    line-height: 13px;
    text-align: right;
    white-space: nowrap;
    background: #fff;
}

td:nth-child(2) {
    text-align: left;
    font-size: 9px;
}

td:nth-child(11) {
    font-weight: 700;
}

td.outside {
    background: #9e9e9e;
}

/* borde derecho de la página */
td:nth-child(12) {
    border-left: 3px solid #0a0aa8;
}

.grid td:nth-child(n+3):nth-child(-n+10),
.line {
    border-right: 1px solid #8c8c8c;
}

.grid td:nth-child(n+4):nth-child(-n+11),
.bars td:nth-child(-n+11),
.label td:nth-child(-n+3) {
    border-bottom: 1px solid #8c8c8c;
}

.label td:nth-child(2) {
    border-right: 1px solid #8c8c8c;
}

.last td:nth-child(-n+11) {
    border-bottom-color: #fff;
}

.bar {
    position: absolute;
    z-index: 2;
    top: 4px;
    height: 6px;
    background: #f50000;
}

.page-break {
    position: absolute;
    z-index: 2;
    top: 13px;
    left: 0;
    width: 913px;
    height: 2px;
    background: repeating-linear-gradient(90deg, #17176e 0 7px, #fff 7px 10px);
}

.before td:nth-child(-n+11) {
    border-bottom: 2px solid #000;
}

.before .outside:nth-child(-n+14) {
    border-bottom: 2px solid #5a5a5a;
}

.selected th {
    background: #f8cf85;
    border-color: #e8ad60;
}

.selected td {
    background: #e7eaf4;
}

.selected .outside {
    background: #a9abb6;
}

.selected .outside:nth-child(14) {
    border-right: 2px solid #5a5a5a;
}

.selected .outside:nth-child(15) {
    background: #9e9e9e;
}

tbody .edge {
    height: 4px;
}

.edge th,
.edge td {
    line-height: 0;
    padding: 0;
}

.edge th {
    background: #f8cf85;
}

.edge td:nth-child(-n+11) {
    background: #5a5a5a;
    border-top: 2px solid #0a0aa8;
}

.edge .outside:nth-child(-n+14) {
    background: linear-gradient(#a9abb6 50%, #5a5a5a 50%);
}

.handle {
    position: absolute;
    right: -2px;
    top: 0;
    width: 5px;
    height: 5px;
    background: #4a4a4a;
}

tbody .blank {
    height: 15px;
}

.blank td {
    background: #9e9e9e;
}

.blank td:nth-child(12) {
    border: none;
}

.watermark {
    position: absolute;
    left: 192px;
    top: 256px;
    color: #949494;
    font: 74px "Liberation Sans", Arial, sans-serif;
    mix-blend-mode: multiply;
    white-space: nowrap;
}

.vscroll {
    display: flex;
    flex-direction: column;
    align-items: center;
    width: 14px;
    margin-right: 4px;
    background: linear-gradient(90deg, #6c8ebf, #8aa9d6);
}

.split {
    width: 12px;
    height: 6px;
    background: #f5f9ff;
    border: 1px solid #6b87b3;
}

.vscroll button {
    height: 15px;
}

.vscroll .track {
    flex: 1;
}

.vscroll .thumb {
    width: 12px;
    height: 120px;
    background:
        repeating-linear-gradient(#8aa0c0 0 1px, transparent 1px 3px) no-repeat center / 6px 7px,
        linear-gradient(90deg, #f7fafe, #cfdcee);
    border: 1px solid #6b87b3;
    border-radius: 2px;
}

.tip {
    position: absolute;
    right: 1px;
    bottom: 42px;
    padding: 0 2px;
    color: #555;
    background: linear-gradient(#fff, #e3e7f2);
    border: 1px solid #767676;
    border-radius: 2px;
    line-height: 14px;
    white-space: nowrap;
}

/* Marca sobre la hoja, cubre también la barra de estado */
.brand {
    position: absolute;
    z-index: 3;
    right: 64px;
    top: 442px;
    width: 231px;
    height: 90px;
    color: #1d1d1d;
    background: linear-gradient(rgba(246, 246, 246, 0.9) 75%, rgba(246, 248, 252, 0.85) 94%, rgba(246, 248, 252, 0.2));
    font: 700 49px/90px Lato, sans-serif;
    text-shadow: -1px 0 #e0a060, 1px 0 #6090d0;
}

.cursor {
    position: absolute;
    z-index: 4;
    right: 118px;
    top: 444px;
}

/* Etiquetas de hojas */
.sheet-tabs {
    display: flex;
    height: 15px;
    background: #9db9e4;
    border-top: 1px solid #cfdef3;
}

.sheet-tabs > button {
    width: 13px;
    background: #d2e2f8;
}

.sheet-tabs > .new-sheet {
    width: 40px;
    margin-left: -8px;
    background: none;
}

.sheet-name {
    margin-left: 4px;
    padding: 0 17px 0 8px;
    color: #1e3f7d;
    background: #fff;
    font-size: 11px;
    font-weight: 700;
    line-height: 14px;
    text-decoration: none;
    clip-path: polygon(0 0, 100% 0, calc(100% - 10px) 100%, 0 100%);
    white-space: nowrap;
}

.hscroll {
    display: flex;
    align-items: center;
    width: 332px;
    margin-left: auto;
    margin-right: 18px;
    background: #7395c9;
}

.hscroll button {
    width: 17px;
}

.grip {
    width: 5px;
    height: 12px;
    background: #f5f9ff;
    border: 1px solid #6b87b3;
}

.hscroll .track {
    flex: 1;
}

.hscroll .thumb {
    width: 248px;
    height: 12px;
    background: linear-gradient(#f7fafe, #cfdcee);
    border: 1px solid #6b87b3;
}

/* Barra de estado */
.status {
    display: flex;
    align-items: center;
    height: 19px;
    padding: 0 5px 0 6px;
    background: linear-gradient(#dcebff, #b5d0f5 50%, #cfe2fb);
    border-top: 1px solid #7a99c6;
    white-space: nowrap;
}

.ready {
    padding-right: 8px;
    border-right: 1px solid #8fb1d8;
}

.sums {
    display: flex;
    gap: 14px;
    margin-left: auto;
    margin-right: 18px;
}

.views {
    display: flex;
    height: 14px;
    background: #eef4fc;
}

.views button {
    width: 17px;
}

.views .on {
    background: #fbc764;
}

.percent {
    margin: 0 8px 0 6px;
}

.round {
    width: 13px;
    height: 13px;
    background: #edf4fd;
    border: 1px solid #5b7197;
    border-radius: 50%;
    font-size: 12px;
    font-weight: 700;
    line-height: 10px;
}

.status input {
    appearance: none;
    width: 94px;
    height: 12px;
    margin: 0;
    background: linear-gradient(#5b7aaa, #5b7aaa) no-repeat center / 100% 1px;
}

.status input::-webkit-slider-thumb {
    appearance: none;
    width: 8px;
    height: 11px;
    background: #edf4fd;
    border: 1px solid #5b7197;
    border-radius: 1px 1px 4px 4px;
}

/* Barra de tareas */
.taskbar {
    display: flex;
    align-items: center;
    height: 28px;
    padding-right: 11px;
    color: #fff;
    background: linear-gradient(#8a8d90, #47494c 20%, #2d2f31 48%, #050607 52%, #08090a);
    white-space: nowrap;
}

.start {
    position: relative;
    width: 54px;
    height: 34px;
}

.launch {
    display: flex;
    justify-content: space-between;
    width: 78px;
    margin: 0 10px 0 4px;
}

.tasks {
    display: flex;
    gap: 4px;
}

.tasks button {
    width: 114px;
    height: 25px;
    gap: 4px;
    padding: 0 4px 0 6px;
    justify-content: flex-start;
    background: linear-gradient(#6d7073, #3a3c3e 48%, #0b0c0d 52%, #1b1d1e);
    border: 1px solid #66696c;
    border-radius: 3px;
}

.tasks span {
    flex: 1;
    text-align: left;
}

.tasks .current {
    background: #0c0d0e;
}

.tasks .caret {
    margin: 0;
    border-width: 4px 3px 0;
    border-top-color: #fff;
}

.lang {
    margin-left: auto;
}

.tray {
    display: flex;
    align-items: center;
    gap: 2px;
    margin: 0 6px 0 14px;
}

.tray .gap {
    margin-left: 8px;
}
```
